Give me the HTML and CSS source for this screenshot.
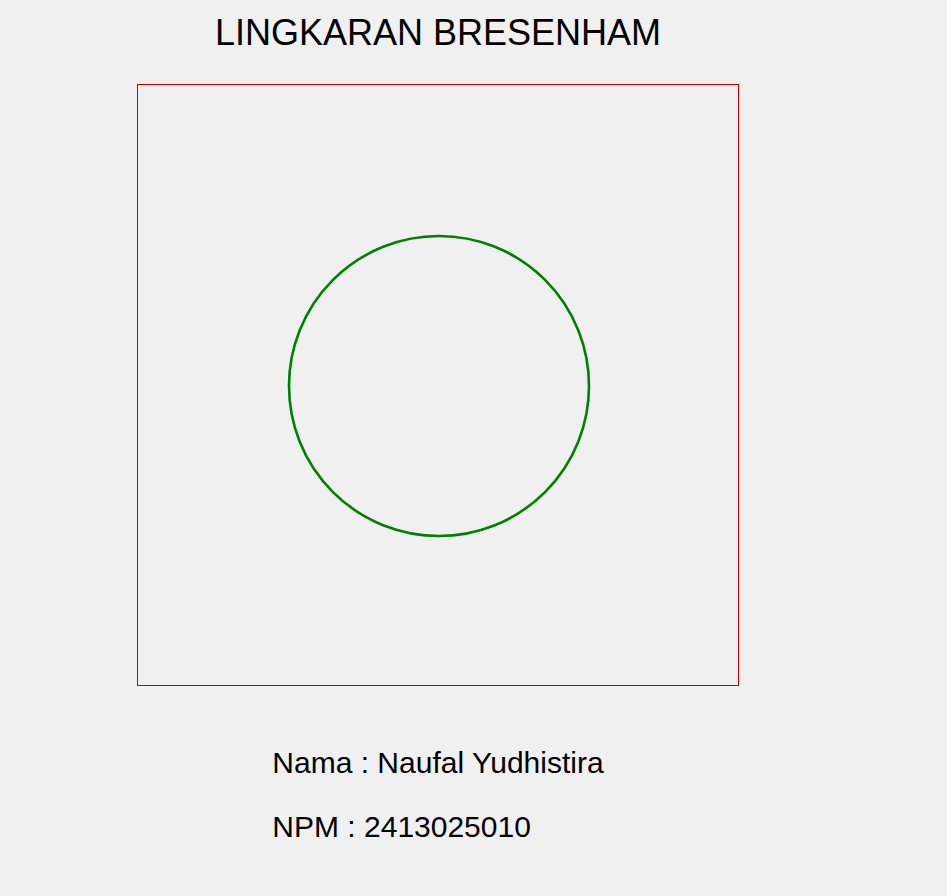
FILE: index.html
```html
<!DOCTYPE html>
<html>
<head>
<meta charset="utf-8">
<title>Lingkaran Bresenham</title>
<link rel="stylesheet" href="styles.css">
</head>
<body>
<main class="page">
  <h1 class="title">LINGKARAN BRESENHAM</h1>
  <div class="canvas">
    <svg class="drawing" width="600" height="600" viewBox="0 0 600 600">
      <circle cx="301" cy="301" r="150" fill="none" stroke="#008000" stroke-width="2.6"/>
    </svg>
  </div>
  <div class="info">
    <p class="line">Nama : Naufal Yudhistira</p>
    <p class="line">NPM : 2413025010</p>
  </div>
</main>
</body>
</html>
```
FILE: styles.css
```css
html, body {
  margin: 0;
  padding: 0;
  background: #f0f0f0;
}
body {
  font-family: "Liberation Sans", Arial, sans-serif;
  color: #000;
}
.page {
  width: 602px;
  margin-left: 137px;
  padding-top: 13px;
  display: flex;
  flex-direction: column;
  align-items: center;
}
.title {
  margin: 0;
  font-size: 36px;
  font-weight: normal;
  line-height: 40px;
  text-align: center;
}
.canvas {
  margin-top: 31px;
  width: 600px;
  height: 600px;
  border: 1px solid #cc0000;
}
.drawing {
  display: block;
}
.info {
  margin-top: 45px;
}
.line {
  margin: 0;
  font-size: 30px;
  line-height: 64px;
}
```
